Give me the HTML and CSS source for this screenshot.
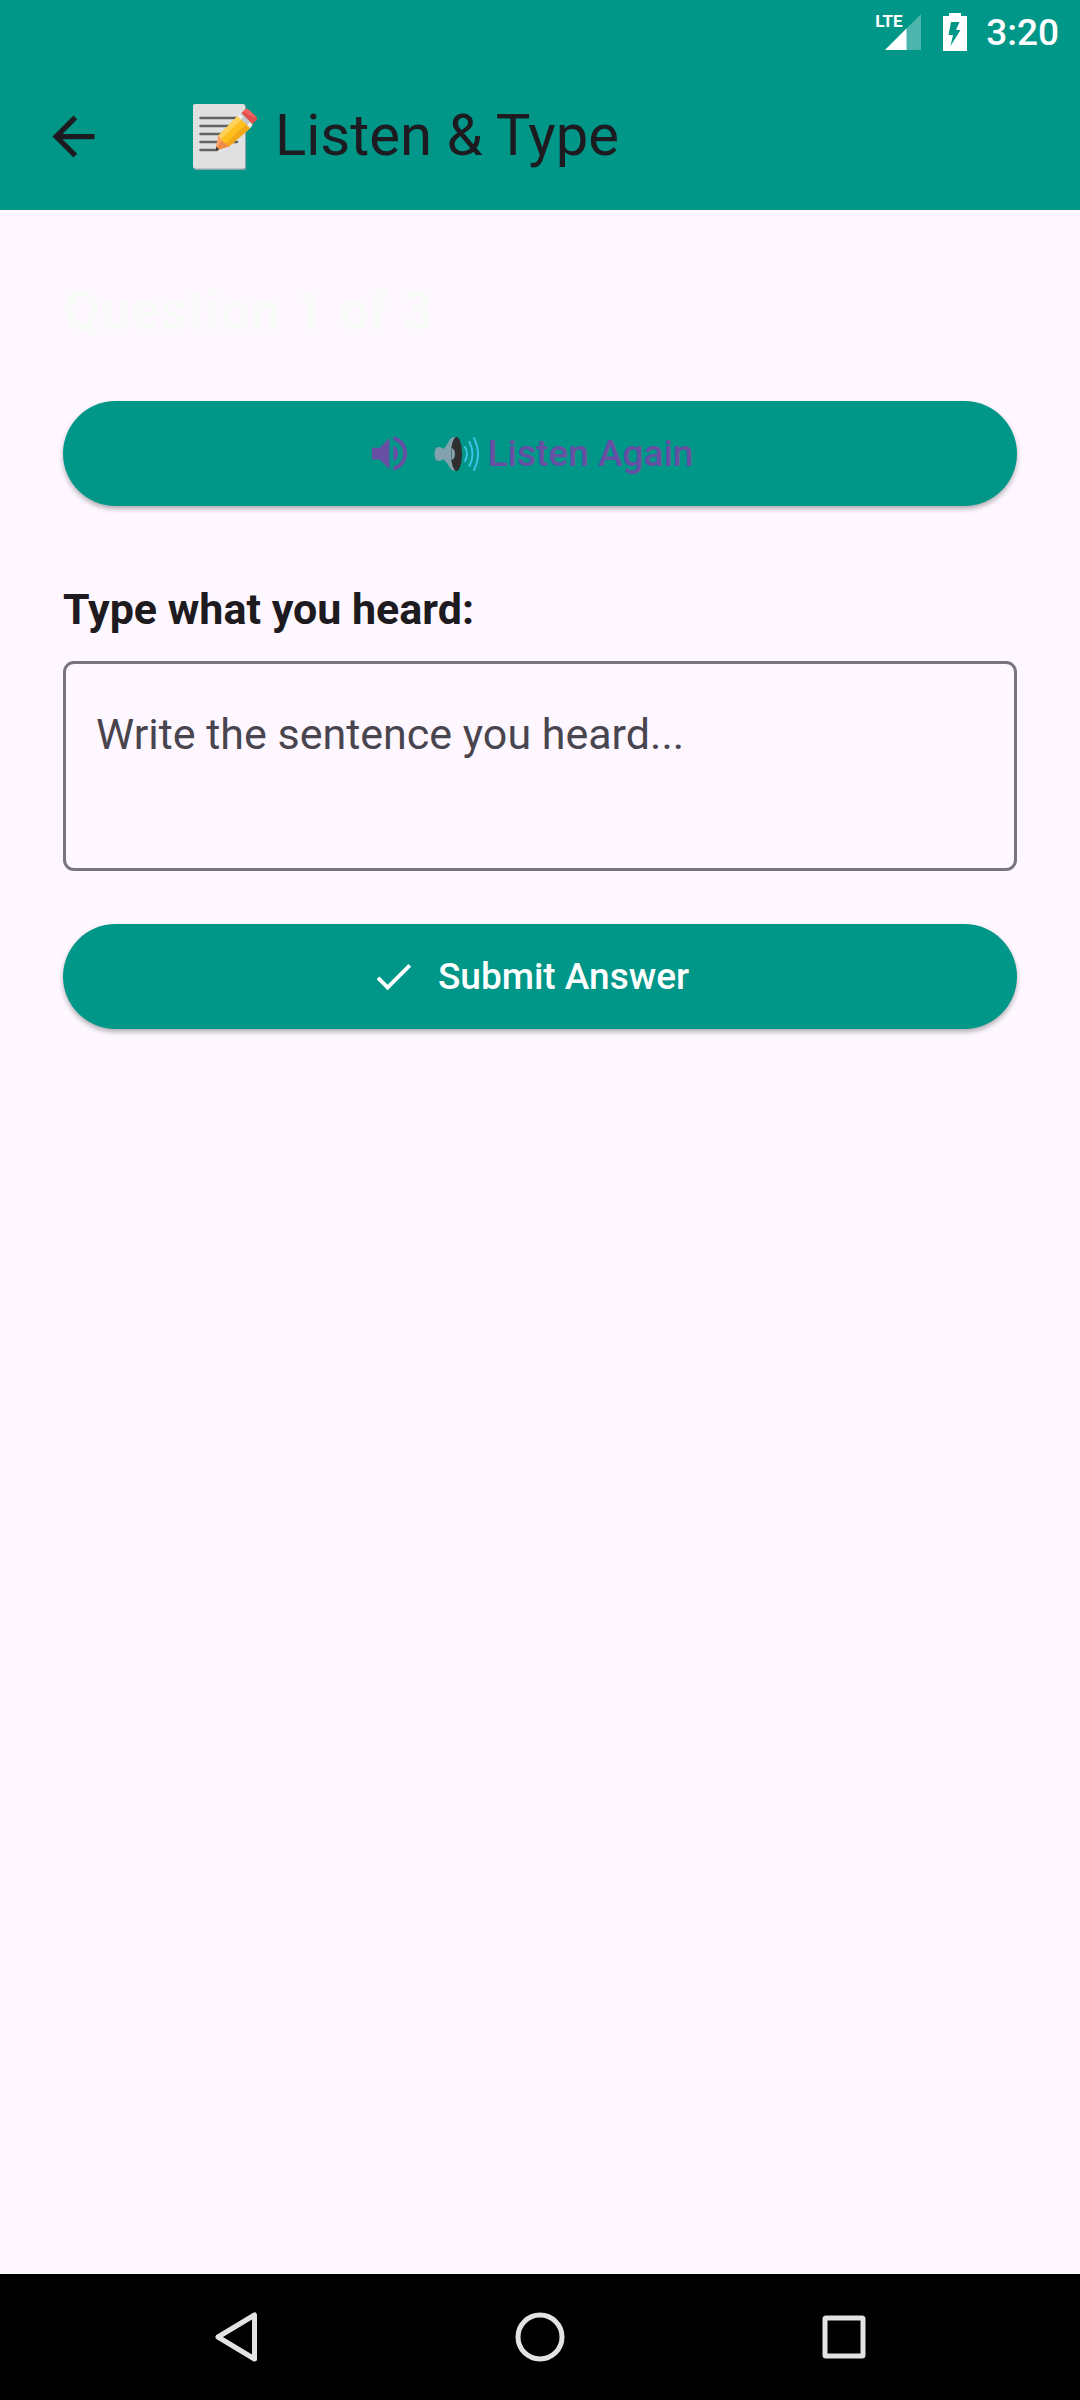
FILE: index.html
```html
<!DOCTYPE html>
<html lang="en">
<head>
<meta charset="utf-8">
<meta name="viewport" content="width=device-width, initial-scale=1">
<title>Listen &amp; Type</title>
<link rel="stylesheet" href="styles.css">
</head>
<body>
<div class="screen">
  <header class="top">
    <div class="status-bar">
      <div class="signal">
        <svg class="signal-icon" viewBox="0 0 36 36" aria-hidden="true">
          <path d="M36 0V36H0Z" fill="#fff" opacity=".3"/>
          <path d="M21.500 14.500V36H0Z" fill="#fff"/>
        </svg>
        <span class="network">LTE</span>
      </div>
      <svg class="battery-icon" viewBox="0 0 24 38" aria-hidden="true">
        <path fill="#fff" fill-rule="evenodd" d="M6 0H18V3H24V38H0V3H6ZM8 9 5.500 22H10L7.500 33 17.500 17H13L16.500 9Z"/>
      </svg>
      <span class="time">3:20</span>
    </div>
    <div class="app-bar">
      <button class="back" type="button" aria-label="Back">
        <svg class="icon-large" viewBox="0 0 24 24" aria-hidden="true"><path fill="currentColor" d="M20 11H7.830l5.590-5.590L12 4l-8 8 8 8 1.410-1.410L7.830 13H20v-2z"/></svg>
      </button>
      <h1 class="title">
        <svg class="memo" viewBox="0 0 66 66" aria-hidden="true">
          <rect x="1" y="1" width="52" height="65" rx="2" fill="#90a4ae"/>
          <rect width="52" height="64.500" rx="2" fill="#e0e0e0"/>
          <path d="M7.500 14H44M7.500 22H40M7.500 30H35M7.500 38H44M7.500 46H24" stroke="#616161" stroke-width="2.600" stroke-linecap="round"/>
          <path d="M44.500 12 57.500 24 36 42.500 27.500 44 25.500 36.500 26 31Z" fill="#ffc01f"/>
          <path d="M44.500 12 48.500 15.500 28 35 25.500 33 26 31Z" fill="#ffd25a"/>
          <path d="M53.500 20 57.500 24 36 42.500 27.500 44 33 39Z" fill="#f3a819"/>
          <path d="M25.500 30.500 28.500 36.500 36 42.500 23 46.500 22.500 45Z" fill="#ffa06a"/>
          <path d="M28.500 36.500 36 42.500 23 46.500Z" fill="#ed8b4b"/>
          <path d="M23.500 42.500 26 45.500 22.500 46.800Z" fill="#333"/>
          <path d="M44.500 12 49 8.500 60 19 57.500 24Z" fill="#c4c7c9"/>
          <path d="M44.500 12 47 9.500 50.500 13 48 15.500ZM54 21 56.500 18.500 59.500 21 57 24Z" fill="#eee"/>
          <path d="M48.500 9 52 5.500Q54 4 56 6L63 12.500Q65 14.500 63.500 16L59.500 20Z" fill="#e0504c"/>
          <path d="M50 7.500 53 4.800 56 6 63 12.500 61.500 14Z" fill="#f06461"/>
        </svg>
        <span class="title-text">Listen &amp; Type</span>
      </h1>
    </div>
  </header>

  <main class="content">
    <h2 class="progress">Question 1 of 3</h2>
    <button class="pill listen" type="button">
      <svg class="icon" viewBox="0 0 24 24" aria-hidden="true"><path fill="currentColor" d="M3 9v6h4l5 5V4L7 9H3zm13.500 3c0-1.770-1.020-3.290-2.500-4.030v8.050c1.480-.730 2.500-2.250 2.500-4.020zM14 3.230v2.060c2.890.860 5 3.540 5 6.710s-2.110 5.850-5 6.710v2.060c4.010-.910 7-4.490 7-8.770s-2.990-7.860-7-8.770z"/></svg>
      <span class="pill-text">
        <svg class="speaker" viewBox="0 0 46 36" aria-hidden="true">
          <path d="M1 14Q2 11 5 11Q8 11 9 13Q13 10 16 3Q18 1 21 1V35Q18 35 16 32Q13 26 9 23Q8 25 5 25Q2 25 1 22Q0 18 1 14Z" fill="#82a3ae"/>
          <ellipse cx="22.500" cy="18" rx="5.500" ry="17" fill="#2f2f2f"/>
          <path d="M17.500 12Q21 13 21 18Q21 23 17.500 24Z" fill="#82a3ae"/>
          <path d="M31 11Q35 18 31 25M35.500 6Q41.500 18 35.500 30M40 2Q48 18 40 34" fill="none" stroke="#40c0e7" stroke-width="2" stroke-linecap="round"/>
        </svg>
        <span>Listen Again</span>
      </span>
    </button>
    <label class="answer-label" for="answer">Type what you heard:</label>
    <textarea class="answer" id="answer" placeholder="Write the sentence you heard..."></textarea>
    <button class="pill submit" type="button">
      <svg class="icon" viewBox="0 0 24 24" aria-hidden="true"><path fill="currentColor" d="M9 16.170 4.830 12l-1.420 1.410L9 19 21 7l-1.410-1.410z"/></svg>
      <span>Submit Answer</span>
    </button>
  </main>

  <nav class="nav-bar" aria-label="System">
    <button class="nav-button" type="button" aria-label="Back"><svg class="nav-icon" viewBox="0 0 54 54" aria-hidden="true"><path d="M45.500 5V49L9 27Z"/></svg></button>
    <button class="nav-button" type="button" aria-label="Home"><svg class="nav-icon" viewBox="0 0 54 54" aria-hidden="true"><circle cx="27" cy="27" r="22"/></svg></button>
    <button class="nav-button" type="button" aria-label="Recent apps"><svg class="nav-icon" viewBox="0 0 54 54" aria-hidden="true"><rect x="8" y="8" width="38" height="38" rx="1"/></svg></button>
  </nav>
</div>
</body>
</html>
```
FILE: styles.css
```css
* {
  box-sizing: border-box;
}

body {
  margin: 0;
  background: #fef7ff;
  color: #1d1b20;
  font-family: Roboto, sans-serif;
}

button {
  border: 0;
  padding: 0;
  background: none;
  color: inherit;
  font: inherit;
}

svg {
  display: block;
  flex: none;
}

.screen {
  display: flex;
  flex-direction: column;
  min-height: 100vh;
}

.top {
  background: #009688;
}

.status-bar {
  display: flex;
  justify-content: flex-end;
  align-items: center;
  height: 63px;
  padding-right: 21px;
  color: #fff;
}

.signal {
  position: relative;
  padding-left: 9px;
  margin-right: 22px;
}

.signal-icon {
  width: 36px;
  height: 36px;
}

.network {
  position: absolute;
  left: -1px;
  top: -1px;
  font-size: 17px;
  font-weight: 700;
  line-height: 17px;
}

.battery-icon {
  width: 24px;
  height: 38px;
  margin-right: 19px;
}

.time {
  padding-top: 3px;
  font-size: 37px;
  font-weight: 500;
  line-height: 48px;
}

.app-bar {
  display: flex;
  align-items: center;
  height: 147px;
  padding: 0 42px;
}

.back {
  margin-right: 88px;
}

.icon-large {
  width: 63px;
  height: 63px;
}

.title {
  display: flex;
  align-items: center;
  gap: 16px;
  margin: 0;
  font-size: 58px;
  font-weight: 400;
  line-height: 74px;
}

.title-text {
  padding-bottom: 4px;
}

.memo {
  width: 66px;
  height: 66px;
}

.content {
  display: flex;
  flex: 1;
  flex-direction: column;
  padding: 63px;
}

.progress {
  margin: 0 0 53px;
  color: #f8faf8;
  font-size: 54px;
  font-weight: 700;
  line-height: 75px;
}

.pill {
  display: flex;
  justify-content: center;
  align-items: center;
  gap: 21px;
  min-height: 105px;
  padding: 0 63px 0 42px;
  border-radius: 53px;
  background: #009688;
  box-shadow: 0 3px 5px rgba(0, 0, 0, 0.3);
  font-size: 37px;
  font-weight: 500;
  line-height: 53px;
}

.pill-text {
  display: flex;
  align-items: center;
  gap: 8px;
}

.listen {
  color: #6750a4;
}

.submit {
  color: #fff;
}

.icon {
  width: 47px;
  height: 47px;
}

.speaker {
  width: 46px;
  height: 36px;
}

.answer-label {
  margin: 72px 0 20px;
  font-size: 43px;
  font-weight: 700;
  line-height: 63px;
}

.answer {
  display: block;
  width: 100%;
  height: 210px;
  margin: 0 0 53px;
  padding: 39px 30px;
  border: 3px solid #79747e;
  border-radius: 11px;
  background: transparent;
  color: #1d1b20;
  font: 400 43px/63px Roboto, sans-serif;
  resize: none;
}

.answer::placeholder {
  color: #49454f;
  opacity: 1;
}

.nav-bar {
  display: grid;
  grid-template-columns: repeat(3, 1fr);
  padding: 0 84px;
  height: 126px;
  background: #000;
}

.nav-button {
  display: flex;
  justify-content: center;
  align-items: center;
}

.nav-icon {
  width: 54px;
  height: 54px;
  fill: none;
  stroke: #e3e3e3;
  stroke-width: 5;
  stroke-linejoin: round;
}
```
